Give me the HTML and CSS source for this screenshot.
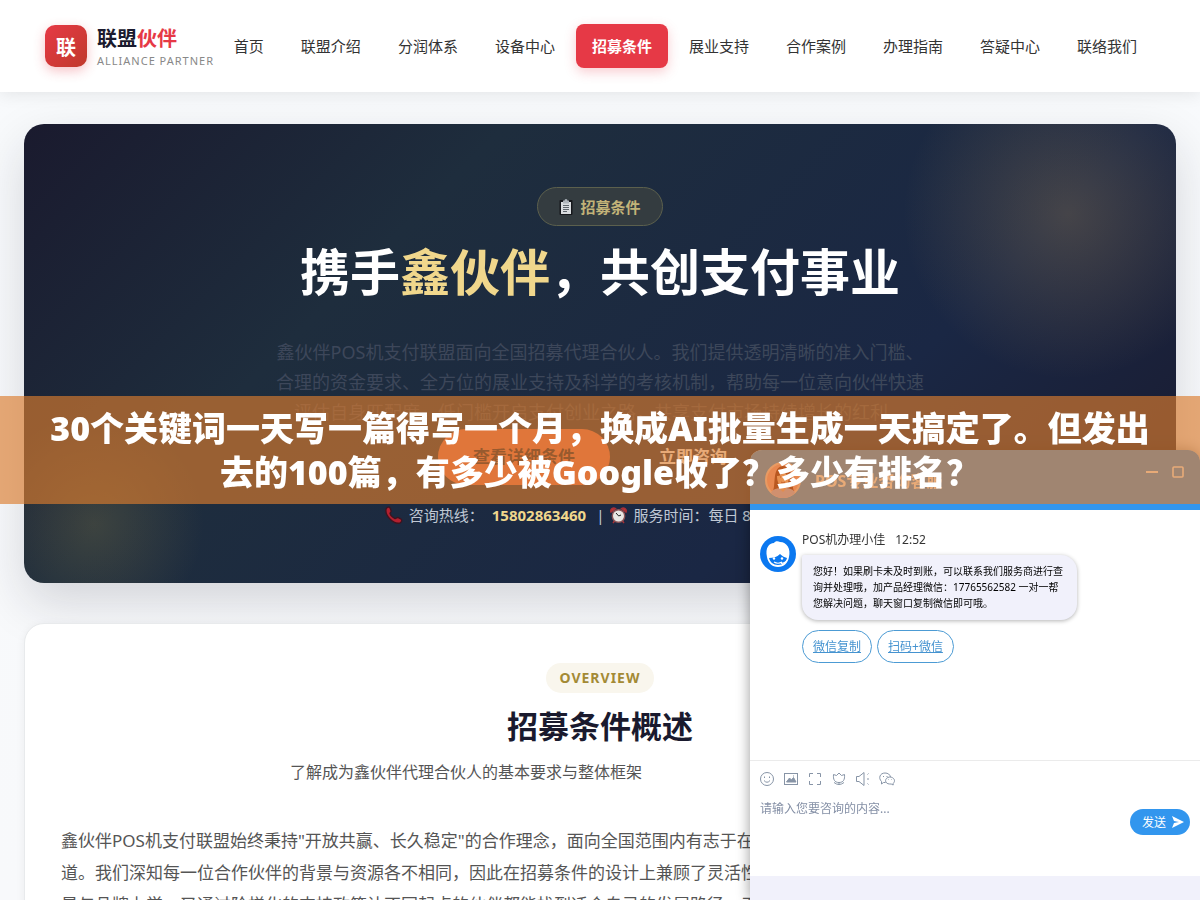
FILE: index.html
```html
<!DOCTYPE html>
<html lang="zh-CN">
<head>
<meta charset="utf-8">
<meta name="viewport" content="width=device-width, initial-scale=1">
<title>招募条件 - 联盟伙伴</title>
<link rel="stylesheet" href="styles.css">
</head>
<body>
<header class="site-header">
  <a class="logo" href="#">
    <span class="logo-mark">联</span>
    <span class="logo-text">
      <span class="logo-name">联盟<em>伙伴</em></span>
      <span class="logo-sub">ALLIANCE PARTNER</span>
    </span>
  </a>
  <nav class="nav">
    <a href="#">首页</a>
    <a href="#">联盟介绍</a>
    <a href="#">分润体系</a>
    <a href="#">设备中心</a>
    <a class="active" href="#">招募条件</a>
    <a href="#">展业支持</a>
    <a href="#">合作案例</a>
    <a href="#">办理指南</a>
    <a href="#">答疑中心</a>
    <a href="#">联络我们</a>
  </nav>
</header>

<main class="main">
  <section class="hero">
    <div class="hero-badge">
      <svg width="14" height="16" viewBox="0 0 14 16"><rect x="0.500" y="1" width="13" height="15" rx="1" fill="#16181c"/><rect x="2" y="3" width="10" height="12" fill="#d9dcdf"/><path d="M4 1.500h1.500a1.500 1.500 0 0 1 3 0H10v3H4z" fill="#aeb4ba"/><path d="M4 6.500h6M4 8.500h6M4 10.500h6M4 12.500h4" stroke="#5e656c"/></svg>
      招募条件
    </div>
    <h1>携手<em>鑫伙伴</em>，共创支付事业</h1>
    <p class="hero-desc">鑫伙伴POS机支付联盟面向全国招募代理合伙人。我们提供透明清晰的准入门槛、合理的资金要求、全方位的展业支持及科学的考核机制，帮助每一位意向伙伴快速评估自身匹配度，低门槛开启支付创业之路，共享支付市场持续增长的红利。</p>
    <div class="hero-actions">
      <a class="btn btn-primary" href="#">查看详细条件</a>
      <a class="btn btn-ghost" href="#">立即咨询</a>
    </div>
    <div class="hero-contact">
      <svg width="18" height="18" viewBox="0 0 16 16"><path d="M1 2.500C2 .5 4 .5 4.600 2l.9 2.400c.2.900-1.300 1.600-1 2.400.6 1.800 2.400 3.500 4.400 4.400.9.300 1.500-1.200 2.500-1l2.600 1.200c1.500.8 1 3-.8 3.800C7.500 16.500-.5 8.500 1 2.500z" fill="#b3202f" stroke="#3d1420" stroke-width="1.200"/></svg>
      <span>咨询热线：</span><strong>15802863460</strong><span>|</span>
      <svg width="17" height="17" viewBox="0 0 17 17"><path d="M1 5a3 3 0 0 1 4.500-3.500zM16 5a3 3 0 0 0-4.500-3.500zM3 16l2-2.500M14 16l-2-2.500" fill="#c33a3a" stroke="#a83036" stroke-width="1.500"/><circle cx="8.500" cy="9" r="6.200" fill="#e9e7e4" stroke="#8b5558" stroke-width="1.400"/><path d="M6 6l2.700 3L11 8" fill="none" stroke="#222"/></svg>
      <span>服务时间：每日 8:00-20:00</span>
    </div>
  </section>

  <section class="card">
    <span class="card-tag">OVERVIEW</span>
    <h2>招募条件概述</h2>
    <p class="card-sub">了解成为鑫伙伴代理合伙人的基本要求与整体框架</p>
    <p class="card-body">鑫伙伴POS机支付联盟始终秉持"开放共赢、长久稳定"的合作理念，面向全国范围内有志于在<br>道。我们深知每一位合作伙伴的背景与资源各不相同，因此在招募条件的设计上兼顾了灵活性<br>是与品牌力学，又通过阶梯化的支持政策让不同起点的伙伴都能找到适合自己的发展路径。无</p>
  </section>
</main>

<aside class="chat">
  <div class="chat-head">
    <svg width="36" height="36" viewBox="0 0 36 36"><circle cx="18" cy="18" r="17" fill="#ff9f90" stroke="#ffd2c4" stroke-width="2"/><path d="M8 29C11 22 7 5 18 4c11 0 8 17 11 25z" fill="#7a1408"/><path d="M6 31c2-5 8-5 12-5s10 0 12 5a17 17 0 0 1-24 0z" fill="#b9b4e8"/><path d="M15 21h6v6l-3 3-3-3z" fill="#f3a880"/><path d="M12 14c3 0 6-2 7-5 1 3 3 4 5 5 0 6-2 10-6 10s-6-4-6-10z" fill="#ffb890"/><path d="M15 15h1M20 15h1M16 20q2 2 4 0" fill="none" stroke="#a02c1c"/></svg>
    <span class="chat-title">POS专业咨询客服</span>
    <button class="win-btn" aria-label="最小化"><svg width="12" height="12" viewBox="0 0 12 12"><path d="M0 6h12" stroke="#fff" stroke-width="2"/></svg></button>
    <button class="win-btn" aria-label="最大化"><svg width="12" height="12" viewBox="0 0 12 12"><rect x="1" y="1" width="10" height="10" rx="1" fill="none" stroke="#fff" stroke-width="1.600"/></svg></button>
  </div>
  <div class="chat-log">
    <svg class="agent" width="36" height="36" viewBox="0 0 36 36"><circle cx="18" cy="18" r="18" fill="#0b78f0"/><path d="M7 21C5 12 9 7 14 7c1-2 4-2 6-1 7 0 11 7 9 15-1 6-5 10-11 10S8 27 7 21z" fill="#fff"/><path d="M9 22c4 0 8-1 11-4 2 2 4 3 7 4-1 4-4 7-9 7s-8-3-9-7z" fill="#0b78f0"/><circle cx="14" cy="22.500" r="1.200" fill="#fff"/><circle cx="22" cy="22.500" r="1.200" fill="#fff"/><path d="M14 26q4 2.500 8 0M27 24q-1 3-6 3.500" fill="none" stroke="#fff" stroke-width="1.200"/></svg>
    <div class="msg">
      <div class="msg-meta"><span>POS机办理小佳</span><span>12:52</span></div>
      <div class="bubble">您好！如果刷卡未及时到账，可以联系我们服务商进行查询并处理哦，加产品经理微信：17765562582 一对一帮您解决问题，聊天窗口复制微信即可哦。</div>
      <div class="msg-links"><a href="#">微信复制</a><a href="#">扫码+微信</a></div>
    </div>
  </div>
  <div class="chat-input">
    <div class="tools">
      <button aria-label="表情"><svg viewBox="0 0 16 16"><circle cx="8" cy="8" r="6.500"/><path d="M5 9.500q3 3.500 6 0M5.500 5.500v1.500M10.500 5.500v1.500"/></svg></button>
      <button aria-label="图片"><svg viewBox="0 0 16 16"><rect x="1.500" y="2.500" width="13" height="11"/><path d="M3.500 11l3-4 2 2 2-2.500 2.500 4.500z" fill="#8794a6"/><path d="M10 5h1"/></svg></button>
      <button aria-label="截图"><svg viewBox="0 0 16 16"><path d="M2.500 6V2.500H6M10 2.500h3.500V6M13.500 10v3.500H10M6 13.500H2.500V10"/></svg></button>
      <button aria-label="评价"><svg viewBox="0 0 16 16"><path d="M2.500 3.500l3 1L8 2l2.500 2.500 3-1c.5 5-1 8-5.500 8s-6-3-5.500-8zM8 11.500v2M3 11.500q5 4 10 0"/></svg></button>
      <button aria-label="声音"><svg viewBox="0 0 16 16"><path d="M1.500 5.500v5H4l5 4V1.500l-5 4zM12 8h2M12.500 3.500l1-1M12.500 12.500l1 1"/></svg></button>
      <button aria-label="微信"><svg viewBox="0 0 16 16"><path d="M6.500 11.500h-2L2.500 13V10.500C-1 7 1 2 6 2c3 0 5 1.500 5.500 4M10.700 6c-5.500.5-5.500 7 0 7h1.500l2 1v-1.700C17 10 15 6 10.700 6zM4.500 5v1M8 5v1M9.500 8.500v.5M12.500 8.500v.5"/></svg></button>
    </div>
    <div class="compose">
      <textarea aria-label="咨询内容" placeholder="请输入您要咨询的内容..."></textarea>
      <button class="send">发送<svg width="12" height="12" viewBox="0 0 12 12"><path d="M0 0l12 6L0 12l2-5 5-1-5-1z" fill="#fff"/></svg></button>
    </div>
  </div>
  <div class="chat-foot"></div>
</aside>

<div class="banner">30个关键词一天写一篇得写一个月，换成AI批量生成一天搞定了。但发出去的100篇，有多少被Google收了？多少有排名？</div>
</body>
</html>
```
FILE: styles.css
```css
* { box-sizing: border-box; }
body {
  margin: 0;
  height: 100vh;
  overflow: hidden;
  background: linear-gradient(180deg, #f8fafc, #f8f9fb);
  color: #333;
  font-family: "Noto Sans", "Noto Sans CJK SC", sans-serif;
  font-size: 15px;
}
a { color: inherit; text-decoration: none; }
em { font-style: normal; }
h1, h2, p { margin: 0; }
button { border: 0; padding: 0; background: none; font: inherit; cursor: pointer; }
svg { display: block; flex: none; }

.site-header {
  position: relative;
  z-index: 1;
  display: flex;
  align-items: center;
  justify-content: space-between;
  height: 92px;
  padding: 0 47px 0 45px;
  background: #fff;
  box-shadow: 0 2px 16px rgba(0, 0, 0, 0.09);
}
.logo { display: flex; align-items: center; gap: 10px; }
.logo-mark {
  display: grid;
  place-items: center;
  width: 42px;
  height: 42px;
  border-radius: 10px;
  background: linear-gradient(135deg, #e63946, #c0392b);
  box-shadow: 0 4px 12px rgba(230, 57, 70, 0.3);
  color: #fff;
  font-size: 20px;
  font-weight: 700;
}
.logo-text { display: flex; flex-direction: column; padding-top: 2px; }
.logo-name { color: #1a1a2e; font-size: 20px; font-weight: 700; line-height: 28px; }
.logo-name em { color: #e63946; }
.logo-sub { color: #888; font-size: 11px; line-height: 16px; letter-spacing: 1px; white-space: nowrap; }
.nav { display: flex; gap: 5px; }
.nav a { padding: 0 16px; border-radius: 8px; line-height: 44px; white-space: nowrap; }
.nav .active {
  background: #e63946;
  box-shadow: 0 4px 12px rgba(230, 57, 70, 0.25);
  color: #fff;
  font-weight: 700;
}

.main { display: flex; flex-direction: column; gap: 40px; padding: 32px 24px; }
.hero {
  display: flex;
  flex-direction: column;
  align-items: center;
  padding: 63px 24px 56px;
  border-radius: 20px;
  background:
    radial-gradient(circle at 1044px 90px, rgba(212, 165, 90, 0.23), rgba(212, 165, 90, 0) 165px),
    radial-gradient(circle at 70px 400px, rgba(201, 168, 76, 0.18), rgba(201, 168, 76, 0) 110px),
    linear-gradient(135deg, #1a1a2e 0%, #1e2d3d 30%, #1a2744 70%, #1a1a2e 100%);
  box-shadow: 0 20px 50px rgba(26, 26, 46, 0.16);
  color: #fff;
}
.hero-badge {
  display: flex;
  align-items: center;
  gap: 7px;
  height: 39px;
  padding: 0 21px;
  border: 1px solid #5c604d;
  border-radius: 20px;
  background: #343c40;
  color: #c2b378;
  font-weight: 700;
}
.hero h1 { margin-top: 11px; font-size: 50px; font-weight: 700; line-height: 70px; white-space: nowrap; }
.hero h1 em { color: #f0d78c; }
.hero-desc { max-width: 650px; margin-top: 30px; color: #3d475a; font-size: 18px; line-height: 30px; text-align: center; }
.hero-actions { display: flex; gap: 14px; margin-top: 2px; }
.btn { padding: 0 35px; border-radius: 28px; font-size: 17px; font-weight: 700; line-height: 56px; }
.btn-primary { background: #e96c50; color: #1a1a2e; }
.hero-contact { display: flex; align-items: center; gap: 6px; margin-top: 18px; color: #bfc7d3; line-height: 24px; white-space: nowrap; }
.hero-contact strong { margin: 0 4px 0 2px; color: #f0d78c; }

.card {
  display: flex;
  flex-direction: column;
  align-items: center;
  padding: 39px 36px;
  border: 1px solid #e8eaec;
  border-radius: 20px;
  background: #fff;
  box-shadow: 0 2px 10px rgba(0, 0, 0, 0.06);
}
.card-tag { padding: 0 14px; border-radius: 15px; background: #f9f6ed; color: #a38a35; font-size: 14px; font-weight: 700; line-height: 30px; letter-spacing: 1px; }
.card h2 { margin-top: 11px; color: #1a1a2e; font-size: 31px; line-height: 44px; }
.card-sub { width: 620px; max-width: 100%; margin-top: 10px; color: #555; font-size: 16px; line-height: 28px; }
.card-body { align-self: stretch; margin-top: 39px; color: #555; font-size: 17px; line-height: 32px; white-space: nowrap; }

.chat {
  position: fixed;
  z-index: 2;
  right: 0;
  bottom: 0;
  display: flex;
  flex-direction: column;
  width: 450px;
  height: 450px;
  overflow: hidden;
  border-radius: 12px 12px 0 0;
  background: #fff;
  box-shadow: 0 0 14px rgba(0, 0, 0, 0.4);
  font-size: 12px;
}
.chat-head { display: flex; align-items: center; gap: 14px; height: 60px; padding: 0 16px 0 15px; background: #3296ee; color: #fff; }
.chat-title { flex: 1; font-size: 16px; font-weight: 700; }
.win-btn { height: 30px; display: grid; place-items: center; align-self: flex-start; margin-top: 7px; }
.chat-log { display: flex; flex: 1; gap: 6px; padding: 20px 10px; }
.agent { margin-top: 6px; }
.msg-meta { display: flex; gap: 10px; line-height: 20px; }
.bubble {
  width: 275px;
  margin-top: 5px;
  padding: 8px 11px 9px;
  border-radius: 2px 16px 16px 16px;
  background: #f1f1fb;
  box-shadow: 0 1px 4px rgba(0, 0, 0, 0.3);
  color: #000;
  font-size: 10px;
  line-height: 16px;
}
.msg-links { display: flex; gap: 5px; margin-top: 10px; }
.msg-links a { padding: 0 10px; border: 1px solid #4c9bd4; border-radius: 17px; color: #4593d0; line-height: 31px; text-decoration: underline; }
.chat-input { height: 116px; padding: 10px; border-top: 1px solid #ebebeb; }
.tools { display: flex; gap: 8px; margin-left: -1px; }
.tools svg { width: 16px; height: 16px; fill: none; stroke: #8794a6; }
.compose { display: flex; align-items: center; margin-top: 12px; }
.compose textarea { flex: 1; height: 46px; border: 0; padding: 0; outline: 0; resize: none; font: inherit; line-height: 20px; }
.compose textarea::placeholder { color: #8590a6; }
.send { display: flex; align-items: center; justify-content: flex-end; gap: 6px; width: 60px; height: 26px; padding-right: 6px; border-radius: 13px; background: #3296ee; color: #fff; }
.chat-foot { height: 24px; background: #f1f1fb; }

.banner {
  position: fixed;
  z-index: 3;
  top: 396px;
  right: 0;
  left: 0;
  padding: 10px 40px;
  background: rgba(219, 125, 46, 0.65);
  color: #fff;
  font-size: 34px;
  font-weight: 900;
  line-height: 44px;
  text-align: center;
}
```
